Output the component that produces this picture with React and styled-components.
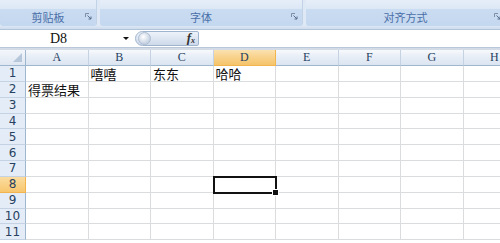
import React from 'react'
import styled, { createGlobalStyle, css } from 'styled-components'

const GlobalStyle = createGlobalStyle`
  html, body {
    margin: 0;
    padding: 0;
    background: #fff;
    overflow: hidden;
  }
  body {
    font-family: "Noto Sans CJK SC", "DejaVu Sans", sans-serif;
  }
`

const groups = [
  { label: '剪贴板', width: 97 },
  { label: '字体', width: 203 },
  { label: '对齐方式', width: 200 },
]

const columns = ['A', 'B', 'C', 'D', 'E', 'F', 'G', 'H']
const rows = [1, 2, 3, 4, 5, 6, 7, 8, 9, 10, 11]

const data = {
  'B1': '嘻嘻',
  'C1': '东东',
  'D1': '哈哈',
  'A2': '得票结果',
}

const activeCol = 'D'
const activeRow = 8

export default function App() {
  return (
    <>
      <GlobalStyle />
      <Window>
        <Ribbon>
          {groups.map(g => (
            <Group key={g.label} $width={g.width}>
              <GroupTop />
              <GroupLabel>
                {g.label}
                <Launcher>
                  <svg width="7" height="7" viewBox="0 0 7 7">
                    <path d="M0.5 4V0.5H4" fill="none" stroke="#7d8fa8" strokeWidth="1" />
                    <path d="M2.5 2.5L6 6M6 3.5V6H3.5" fill="none" stroke="#5a6e8c" strokeWidth="1" />
                  </svg>
                </Launcher>
              </GroupLabel>
            </Group>
          ))}
        </Ribbon>
        <RibbonFoot />
        <FormulaBar>
          <NameBox>
            <NameText>D8</NameText>
            <DropArrow />
          </NameBox>
          <FxPill>
            <Knob />
            <Fx>f<sub>x</sub></Fx>
          </FxPill>
          <FormulaInput />
        </FormulaBar>
        <SheetDivider />
        <Sheet>
          <Corner>
            <svg width="9" height="9" viewBox="0 0 9 9">
              <path d="M9 0V9H0Z" fill="#b7c7db" />
            </svg>
          </Corner>
          {columns.map(c => (
            <ColHead key={c} $active={c === activeCol}>{c}</ColHead>
          ))}
          {rows.map(r => (
            <React.Fragment key={r}>
              <RowHead $active={r === activeRow}>{r}</RowHead>
              {columns.map(c => (
                <Cell key={c + r} $selected={c === activeCol && r === activeRow}>
                  {data[c + r]}
                  {c === activeCol && r === activeRow && <FillHandle />}
                </Cell>
              ))}
            </React.Fragment>
          ))}
        </Sheet>
      </Window>
    </>
  )
}

const Window = styled.div`
  width: 500px;
  height: 243px;
  overflow: hidden;
  background: #fff;
`

const Ribbon = styled.div`
  display: flex;
  gap: 3px;
  height: 26px;
  background: #dfe9f5;
`

const Group = styled.div`
  flex: 0 0 ${p => p.$width}px;
  display: flex;
  flex-direction: column;
  border-radius: 0 0 3px 3px;
  overflow: hidden;
  border-right: 1px solid #c2d3e8;
  box-sizing: border-box;
`

const GroupTop = styled.div`
  height: 9px;
  background: linear-gradient(#e6eef9, #dce7f5);
`

const GroupLabel = styled.div`
  position: relative;
  flex: 1;
  display: flex;
  align-items: center;
  justify-content: center;
  background: linear-gradient(#cadcf1, #c3d7ef);
  color: #4a6fa8;
  font-size: 11px;
  line-height: 17px;
`

const Launcher = styled.span`
  position: absolute;
  right: 4px;
  top: 4px;
  display: flex;
`

const RibbonFoot = styled.div`
  height: 3px;
  background: linear-gradient(#dce7f5, #cfdcec);
  border-bottom: 1px solid #b1c3d9;
`

const FormulaBar = styled.div`
  display: flex;
  height: 17px;
  background: #fff;
`

const NameBox = styled.div`
  position: relative;
  flex: 0 0 135px;
  display: flex;
  align-items: center;
`

const NameText = styled.span`
  flex: 1;
  text-align: center;
  padding-right: 18px;
  font-family: "Liberation Serif", "DejaVu Serif", serif;
  font-size: 14px;
  color: #111;
`

const DropArrow = styled.span`
  position: absolute;
  right: 6px;
  top: 7px;
  width: 0;
  height: 0;
  border-left: 3px solid transparent;
  border-right: 3px solid transparent;
  border-top: 3px solid #111;
`

const FxPill = styled.div`
  flex: 0 0 64px;
  display: flex;
  align-items: center;
  justify-content: space-between;
  box-sizing: border-box;
  margin: 1px 0;
  border: 1px solid #9fb4cf;
  border-radius: 8px 2px 2px 8px;
  background: linear-gradient(#eef3fa, #cdd9ea);
  padding: 0 3px 0 2px;
`

const Knob = styled.span`
  width: 11px;
  height: 11px;
  border-radius: 50%;
  background: radial-gradient(circle at 40% 35%, #ffffff, #c6d2e2 70%);
  border: 1px solid #aebdd2;
`

const Fx = styled.span`
  font-family: "Liberation Serif", "DejaVu Serif", serif;
  font-style: italic;
  font-weight: bold;
  font-size: 13px;
  color: #333;
  line-height: 13px;
  sub {
    font-size: 8px;
    vertical-align: -1px;
  }
`

const FormulaInput = styled.div`
  flex: 1;
  margin-left: 4px;
  background: #fff;
`

const SheetDivider = styled.div`
  height: 2px;
  background: #d3dbe6;
  border-top: 1px solid #bac7d8;
`

const Sheet = styled.div`
  display: grid;
  grid-template-columns: 26px repeat(8, 62.5px);
  grid-template-rows: 16px repeat(11, 15.85px);
  width: 530px;
`

const headBase = css`
  box-sizing: border-box;
  display: flex;
  align-items: center;
  justify-content: center;
  color: #27415f;
  overflow: hidden;
`

const Corner = styled.div`
  ${headBase};
  justify-content: flex-end;
  align-items: flex-end;
  padding: 0 3px 3px 0;
  background: linear-gradient(#f3f6fb, #dfe7f2);
  border-right: 1px solid #9eb6ce;
  border-bottom: 1px solid #9eb6ce;
`

const ColHead = styled.div`
  ${headBase};
  font-family: "Liberation Serif", "DejaVu Serif", serif;
  font-size: 12px;
  border-right: 1px solid ${p => (p.$active ? '#f2b44e' : '#c5d2e3')};
  border-bottom: 1px solid ${p => (p.$active ? '#f2b44e' : '#9eb6ce')};
  background: ${p =>
    p.$active
      ? 'linear-gradient(#fbe2b0, #f8d18a 50%, #f5c46a)'
      : 'linear-gradient(#f7f9fc, #e6edf6 50%, #dbe5f1)'};
`

const RowHead = styled.div`
  ${headBase};
  font-family: "DejaVu Sans", "Liberation Sans", sans-serif;
  font-size: 12px;
  border-right: 1px solid ${p => (p.$active ? '#f2b44e' : '#9eb6ce')};
  border-bottom: 1px solid ${p => (p.$active ? '#f2b44e' : '#c5d2e3')};
  background: ${p => (p.$active ? 'linear-gradient(#fbdca0, #f7c76f)' : '#e4ecf7')};
`

const Cell = styled.div`
  position: relative;
  box-sizing: border-box;
  border-right: 1px solid #dadcdd;
  border-bottom: 1px solid #dadcdd;
  font-size: 13px;
  line-height: 15px;
  padding-left: 2px;
  color: #111;
  white-space: nowrap;
  ${p =>
    p.$selected &&
    css`
      outline: 2px solid #111;
      outline-offset: -1px;
      z-index: 1;
    `}
`

const FillHandle = styled.span`
  position: absolute;
  right: -4px;
  bottom: -4px;
  width: 5px;
  height: 5px;
  background: #111;
  border: 1px solid #fff;
`
